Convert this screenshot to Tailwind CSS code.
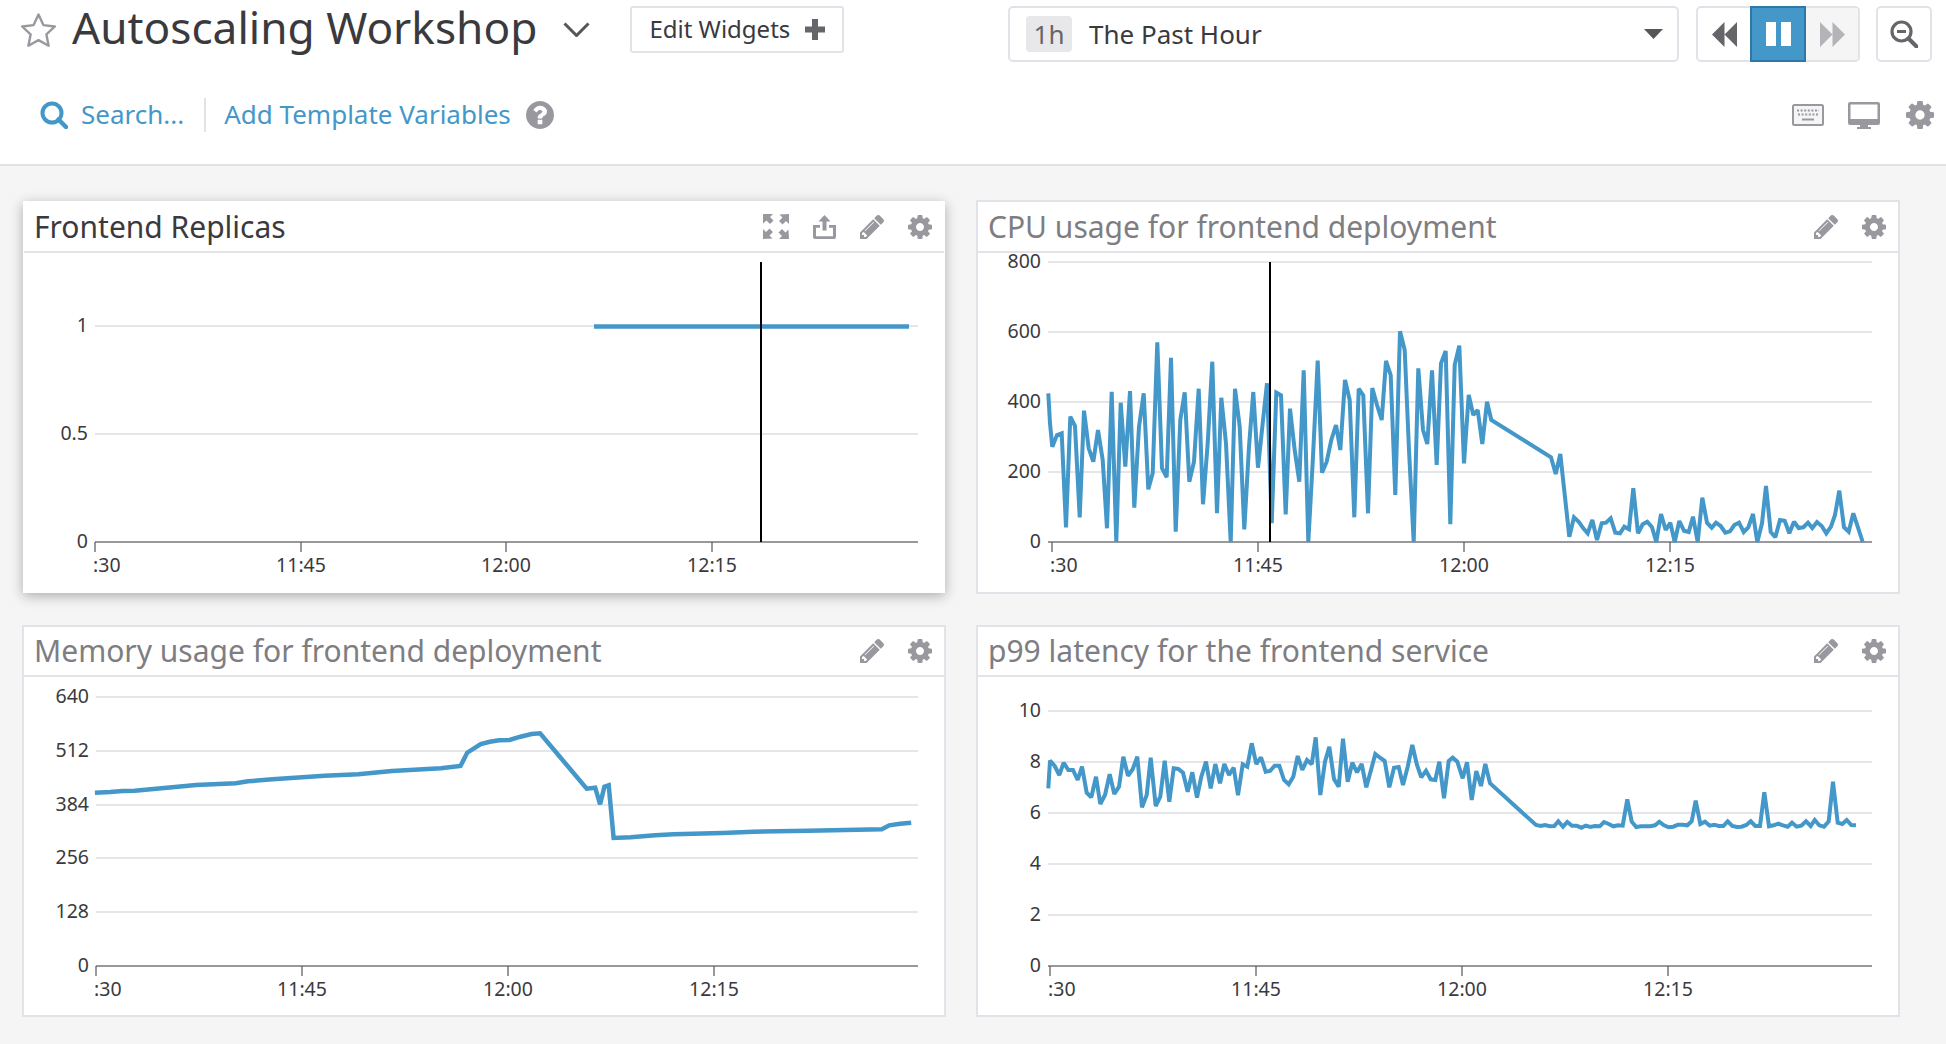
<!DOCTYPE html>
<html lang="en">
<head>
    <meta charset="UTF-8" />
    <title>Autoscaling Workshop</title>
    <script src="https://cdn.jsdelivr.net/npm/@tailwindcss/browser@4"></script>
</head>
<body class="bg-[#f5f5f6] font-['Noto_Sans',sans-serif] text-[#3a3a3e] overflow-hidden">
    <svg class="hidden">
        <symbol id="gear" viewBox="128 128 1536 1536"><path fill="currentColor" d="M1152 896q0-106-75-181t-181-75-181 75-75 181 75 181 181 75 181-75 75-181zm512-109v222q0 12-8 23t-20 13l-185 28q-19 54-39 91 35 50 107 138 10 12 10 25t-9 23q-27 37-99 108t-94 71q-12 0-26-9l-138-108q-44 23-91 38-16 136-29 186-7 28-36 28h-222q-14 0-24.5-8.5t-11.5-21.5l-28-184q-49-16-90-37l-141 107q-10 9-25 9-14 0-25-11-126-114-165-168-7-10-7-23 0-12 8-23 15-21 51-66.5t54-70.5q-27-50-41-99l-183-27q-13-2-21-12.5t-8-23.5v-222q0-12 8-23t19-13l186-28q14-46 39-92-40-57-107-138-10-12-10-24 0-10 9-23 26-36 98.5-107.5t94.5-71.5q13 0 26 10l138 107q44-23 91-38 16-136 29-186 7-28 36-28h222q14 0 24.5 8.5t11.5 21.5l28 184q49 16 90 37l142-107q9-9 24-9 13 0 25 10 129 119 165 170 7 8 7 22 0 12-8 23-15 21-51 66.5t-54 70.5q26 50 41 98l183 28q13 2 21 12.5t8 23.5z"/></symbol>
        <symbol id="pencil" viewBox="128 150 1516 1516"><path fill="currentColor" d="M491 1536l91-91-235-235-91 91v107h128v128h107zm523-928q0-22-22-22-10 0-17 7l-542 542q-7 7-7 17 0 22 22 22 10 0 17-7l542-542q7-7 7-17zm-54-192l416 416-832 832h-416v-416zm683 96q0 53-37 90l-166 166-416-416 166-165q36-38 90-38 53 0 91 38l235 234q37 39 37 91z"/></symbol>
    </svg>

    <!-- Top bar -->
    <header class="h-[166px] bg-white border-b-2 border-[#e2e2e8]">
        <div class="flex justify-between items-start pt-[6px] pr-[14px] pl-[20px]">
            <div class="flex items-center h-[47px]">
                <svg class="w-[37px] h-[35px] text-[#98989e]" viewBox="0 0 37 35"><path d="M18.5 2.5l4.9 10.6 11.4 1.4-8.4 7.9 2.2 11.3-10.1-5.6-10.1 5.6 2.2-11.3-8.4-7.9 11.4-1.4z" fill="none" stroke="currentColor" stroke-width="2.4" stroke-linejoin="round"/></svg>
                <h1 class="ml-[15px] text-[44.2px] leading-[44px] -mt-[6px] whitespace-nowrap">Autoscaling Workshop</h1>
                <svg class="ml-[26px] w-[27px] h-[15px] text-[#55555a]" viewBox="0 0 27 15"><path d="M1.5 1.5l12 12 12-12" fill="none" stroke="currentColor" stroke-width="3"/></svg>
                <button class="ml-[40px] w-[214px] h-[47px] flex items-center justify-center gap-[15px] border-2 border-[#e2e2e8] rounded-[3px] text-[24px] whitespace-nowrap">
                    <span class="-mt-[2px]">Edit Widgets</span>
                    <svg class="w-[20px] h-[21px] text-[#66666a]" viewBox="0 0 20 21"><path d="M7 0h6v7.500h7v6h-7v7.500h-6v-7.500h-7v-6h7z" fill="currentColor"/></svg>
                </button>
            </div>
            <div class="flex items-start">
                <div class="w-[671px] h-[56px] flex items-center border-2 border-[#e2e2e8] rounded-[5px] pl-[16px] pr-[14px]">
                    <span class="w-[46px] h-[36px] flex items-center justify-center bg-[#e8e8ea] rounded-[4px] text-[#66666a] text-[26px]">1h</span>
                    <span class="ml-[17px] text-[26px]">The Past Hour</span>
                    <svg class="ml-auto w-[19px] h-[10px] text-[#55555a]" viewBox="0 0 19 10"><path d="M0 0h19l-9.500 10z" fill="currentColor"/></svg>
                </div>
                <div class="ml-[17px] w-[164px] h-[56px] flex border-2 border-[#e2e2e8] rounded-[5px]">
                    <span class="w-[52px] flex items-center justify-center">
                        <svg class="w-[25px] h-[25px] text-[#66666a]" viewBox="0 0 25 25"><path d="M12.500 0v25l-12.500-12.500zM25 0v25l-12.500-12.500z" fill="currentColor"/></svg>
                    </span>
                    <span class="w-[56px] -my-[2px] flex items-center justify-center gap-[5px] bg-[#4497c9] border-2 border-[#2f77a6]">
                        <i class="block w-[10px] h-[24px] bg-white"></i>
                        <i class="block w-[10px] h-[24px] bg-white"></i>
                    </span>
                    <span class="flex-1 flex items-center justify-center bg-[#f5f5f6] rounded-r-[3px]">
                        <svg class="w-[25px] h-[25px] text-[#b4b4b8]" viewBox="0 0 25 25"><path d="M0 0v25l12.500-12.500zM12.500 0v25l12.500-12.500z" fill="currentColor"/></svg>
                    </span>
                </div>
                <div class="ml-[16px] w-[56px] h-[56px] flex items-center justify-center border-2 border-[#e2e2e8] rounded-[5px]">
                    <svg class="w-[28px] h-[28px] text-[#66666a]" viewBox="0 0 28 28"><circle cx="11.500" cy="11.500" r="9.500" fill="none" stroke="currentColor" stroke-width="3.200"/><path d="M18.500 18.500l8 8" stroke="currentColor" stroke-width="4" stroke-linecap="round"/><path d="M7 11.500h9" stroke="currentColor" stroke-width="3"/></svg>
                </div>
            </div>
        </div>
        <div class="flex justify-between items-center h-[34px] mt-[36px] pl-[40px] pr-[12px]">
            <div class="flex items-center text-[#4497c9] text-[26px]">
                <svg class="w-[28px] h-[28px]" viewBox="0 0 28 28"><circle cx="12" cy="12" r="9.500" fill="none" stroke="currentColor" stroke-width="4"/><path d="M18.500 18.500l7.500 7.500" stroke="currentColor" stroke-width="4.500" stroke-linecap="round"/></svg>
                <span class="ml-[13px] -mt-[2px]">Search...</span>
                <i class="block ml-[20px] w-[2px] h-[34px] bg-[#e2e2e8]"></i>
                <span class="ml-[18px] -mt-[2px]">Add Template Variables</span>
                <svg class="ml-[15px] w-[28px] h-[28px] text-[#98989e]" viewBox="0 128 1536 1536"><path fill="currentColor" d="M896 1376v-192q0-14-9-23t-23-9h-192q-14 0-23 9t-9 23v192q0 14 9 23t23 9h192q14 0 23-9t9-23zm256-672q0-88-55.500-163t-138.500-116-170-41q-243 0-371 213-15 24 8 42l132 100q7 6 19 6 16 0 25-12 53-68 86-92 34-24 86-24 48 0 85.500 26t37.500 59q0 38-20 61t-68 45q-63 28-115.500 86.500t-52.500 125.500v36q0 14 9 23t23 9h192q14 0 23-9t9-23q0-19 21.500-49.500t54.500-49.500q32-18 49-28.500t46-35 44.500-48 28-60.500 12.500-81zm384 192q0 209-103 385.500t-279.500 279.500-385.500 103-385.500-103-279.500-279.500-103-385.500 103-385.500 279.500-279.500 385.500-103 385.500 103 279.500 279.500 103 385.500z"/></svg>
            </div>
            <div class="flex items-center text-[#98989e]">
                <svg class="w-[32px] h-[22px]" viewBox="0 0 32 22"><rect x="1" y="1" width="30" height="20" rx="1.500" fill="#f5f5f6" stroke="currentColor" stroke-width="2"/><path d="M5 6.500h22M6 10.500h20" stroke="currentColor" stroke-width="2" stroke-dasharray="2 1.600"/><path d="M10 15.500h12" stroke="currentColor" stroke-width="2"/></svg>
                <svg class="ml-[24px] w-[32px] h-[27px]" viewBox="0 0 32 27"><path d="M2 0h28a2 2 0 0 1 2 2v19a2 2 0 0 1-2 2h-10v2h3v2h-14v-2h3v-2h-10a2 2 0 0 1-2-2v-19a2 2 0 0 1 2-2zM2.500 2.500v14.500h27v-14.500z" fill="currentColor" fill-rule="evenodd"/></svg>
                <svg class="ml-[26px] w-[28px] h-[28px]"><use href="#gear"/></svg>
            </div>
        </div>
    </header>

    <!-- Widgets -->
    <main class="grid grid-cols-[924px_924px] grid-rows-[394px_392px] gap-x-[30px] gap-y-[31px] pt-[34px] pl-[22px]">
        <section class="flex flex-col m-[1px] bg-white border border-white shadow-[0_3px_12px_rgba(0,0,0,0.3)]">
            <div class="flex items-center h-[51px] pl-[10px] pr-[12px] border-b-2 border-[#e2e2e8]">
                <h2 class="text-[30px] leading-[40px] whitespace-nowrap">Frontend Replicas</h2>
                <div class="ml-auto flex items-center gap-[24px] text-[#98989e]">
                    <svg class="w-[26px] h-[25px]" viewBox="0 0 26 25"><path d="M0 0h10l-3 3 3.500 3.500-3.500 3.500-3.500-3.500-3.500 3zM26 0v10l-3-3-3.500 3.500-3.500-3.500 3.500-3.500-3-3zM0 25v-10l3 3 3.500-3.500 3.500 3.500-3.500 3.500 3 3zM26 25h-10l3-3-3.500-3.500 3.500-3.500 3.500 3.500 3-3z" fill="currentColor"/></svg>
                    <svg class="w-[23px] h-[24px]" viewBox="0 0 23 24"><path d="M11.500 0l6 6.500h-4v9h-4v-9h-4zM0 10h7v2.800h-4v8.400h17v-8.400h-4v-2.800h7v12a2 2 0 0 1-2 2h-19a2 2 0 0 1-2-2z" fill="currentColor"/></svg>
                    <svg class="w-[24px] h-[24px]"><use href="#pencil"/></svg>
                    <svg class="w-[24px] h-[24px]"><use href="#gear"/></svg>
                </div>
            </div>
            <svg id="chartReplicas" class="flex-1 w-full min-h-0 overflow-visible"></svg>
        </section>

        <section class="flex flex-col bg-white border-2 border-[#e2e2e8]">
            <div class="flex items-center h-[51px] pl-[10px] pr-[12px] border-b-2 border-[#e2e2e8]">
                <h2 class="text-[30px] leading-[40px] text-[#7e7e82] whitespace-nowrap">CPU usage for frontend deployment</h2>
                <div class="ml-auto flex items-center gap-[24px] text-[#98989e]">
                    <svg class="w-[24px] h-[24px]"><use href="#pencil"/></svg>
                    <svg class="w-[24px] h-[24px]"><use href="#gear"/></svg>
                </div>
            </div>
            <svg id="chartCpu" class="flex-1 w-full min-h-0 overflow-visible"></svg>
        </section>

        <section class="flex flex-col bg-white border-2 border-[#e2e2e8]">
            <div class="flex items-center h-[50px] pl-[10px] pr-[12px] border-b-2 border-[#e2e2e8]">
                <h2 class="text-[30px] leading-[40px] text-[#7e7e82] whitespace-nowrap">Memory usage for frontend deployment</h2>
                <div class="ml-auto flex items-center gap-[24px] text-[#98989e]">
                    <svg class="w-[24px] h-[24px]"><use href="#pencil"/></svg>
                    <svg class="w-[24px] h-[24px]"><use href="#gear"/></svg>
                </div>
            </div>
            <svg id="chartMemory" class="flex-1 w-full min-h-0 overflow-visible"></svg>
        </section>

        <section class="flex flex-col bg-white border-2 border-[#e2e2e8]">
            <div class="flex items-center h-[50px] pl-[10px] pr-[12px] border-b-2 border-[#e2e2e8]">
                <h2 class="text-[30px] leading-[40px] text-[#7e7e82] whitespace-nowrap">p99 latency for the frontend service</h2>
                <div class="ml-auto flex items-center gap-[24px] text-[#98989e]">
                    <svg class="w-[24px] h-[24px]"><use href="#pencil"/></svg>
                    <svg class="w-[24px] h-[24px]"><use href="#gear"/></svg>
                </div>
            </div>
            <svg id="chartLatency" class="flex-1 w-full min-h-0 overflow-visible"></svg>
        </section>
    </main>

    <script>
        // all series were read off the picture at 3x, so they get scaled down to page coords
        const cpuRaw = [235,610,240,700,247,770,261,735,275,730,288,1012,301,680,315,708,329,982,342,662,356,775,370,815,384,720,398,810,411,1015,425,605,439,1056,452,638,466,830,480,603,493,953,507,710,521,610,535,898,548,850,562,457,576,835,590,862,603,503,617,1025,631,690,644,607,658,875,672,815,686,596,699,943,713,760,727,515,741,970,754,623,768,760,782,1056,795,596,809,710,823,1018,837,770,850,606,864,833,878,700,891,580,905,1000,919,608,933,616,947,973,960,656,974,780,988,875,1001,541,1015,1056,1029,800,1043,512,1056,848,1070,815,1084,750,1098,705,1111,780,1125,570,1139,630,1153,982,1166,596,1180,616,1194,970,1207,594,1221,645,1235,690,1248,513,1262,555,1276,915,1290,424,1304,480,1317,780,1331,1056,1345,535,1359,720,1372,762,1386,541,1400,825,1413,520,1427,483,1441,1003,1454,525,1468,467,1482,820,1496,615,1510,675,1523,660,1537,762,1551,635,1564,690,1743,802,1757,852,1771,792,1798,1040,1812,982,1826,995,1840,1015,1853,1030,1867,990,1881,1050,1895,1000,1908,998,1922,985,1936,1028,1950,1030,1963,1010,1977,1018,1990,895,2004,1030,2018,1003,2032,995,2046,1012,2059,1056,2073,972,2087,1020,2101,998,2114,1056,2128,993,2142,1022,2156,1026,2169,980,2183,1056,2197,923,2211,998,2225,1013,2238,998,2252,1008,2266,1028,2280,1024,2293,1005,2307,998,2321,1026,2335,1012,2349,972,2362,1056,2376,1000,2388,888,2402,1026,2416,1042,2430,990,2444,992,2458,1030,2472,995,2486,1014,2500,1012,2514,998,2527,1014,2541,996,2555,1008,2569,1030,2583,1010,2595,975,2608,902,2622,1012,2636,1025,2650,970,2663,1010,2678,1056];
        const latencyRaw = [235,535,240,452,254,468,268,495,281,458,295,480,309,480,323,510,336,470,350,548,364,562,378,500,391,582,405,555,419,493,433,552,447,530,460,440,474,497,488,478,502,440,516,592,530,555,542,443,557,588,571,560,584,452,598,575,611,475,625,477,639,488,653,545,667,487,681,563,694,500,708,455,722,535,736,462,750,520,763,462,777,495,791,473,804,556,818,463,832,470,845,400,859,462,873,442,887,485,900,483,914,467,928,467,942,510,956,523,970,500,983,438,997,480,1011,450,1025,463,1037,382,1051,555,1065,455,1078,410,1092,507,1106,530,1119,386,1133,515,1147,458,1161,487,1175,462,1189,532,1203,480,1216,432,1230,443,1244,453,1258,532,1272,473,1286,471,1299,525,1313,470,1327,405,1341,465,1354,502,1368,482,1382,508,1396,510,1408,455,1422,565,1436,453,1448,443,1462,455,1478,505,1491,457,1505,570,1519,483,1533,528,1546,462,1560,520,1698,645,1712,648,1725,645,1739,649,1753,648,1765,634,1779,650,1792,636,1806,647,1820,647,1834,653,1847,647,1861,651,1875,648,1889,649,1902,636,1916,642,1930,649,1944,646,1958,647,1972,568,1985,635,1999,651,2013,649,2027,649,2041,649,2055,646,2068,635,2082,646,2096,652,2110,650,2124,644,2138,644,2152,646,2165,634,2177,572,2191,642,2205,635,2219,647,2233,644,2246,648,2260,648,2273,634,2287,648,2301,651,2315,650,2329,645,2342,634,2356,648,2370,648,2383,547,2397,649,2411,646,2425,641,2439,646,2453,650,2466,638,2480,650,2494,647,2508,634,2522,648,2534,630,2548,646,2562,650,2576,634,2589,515,2603,638,2617,642,2630,630,2644,645,2658,646];
        const memoryRaw = [155,548,180,546,200,543,220,542,290,530,320,525,385,520,405,514,445,508,530,497,585,493,640,483,720,475,752,468,763,428,785,402,800,395,815,391,832,390,850,380,868,372,882,370,958,536,972,533,980,583,987,530,994,526,1002,684,1030,682,1070,676,1100,673,1180,669,1230,665,1320,662,1440,658,1452,646,1470,641,1488,638];

        function toPoints(raw, scaleX, offsetX, offsetY) {
            const points = [];
            for (let i = 0; i < raw.length; i += 2) {
                points.push((offsetX + raw[i] / scaleX).toFixed(1) + "," + (offsetY + raw[i + 1] / 3).toFixed(1));
            }
            return points.join(" ");
        }

        function drawChart(id, opts) {
            const svg = document.getElementById(id);
            svg.setAttribute("viewBox", opts.box);
            const font = 'font-family="Noto Sans" font-size="19.500" fill="#3a3a3e"';
            let html = "";
            opts.grid.forEach(([label, y]) => {
                if (y !== opts.axisY) {
                    html += `<line x1="${opts.x0}" x2="${opts.x1}" y1="${y}" y2="${y}" stroke="#e6e6ea" stroke-width="1.800"/>`;
                }
                html += `<text x="${opts.x0 - 7}" y="${y + 5.500}" text-anchor="end" ${font}>${label}</text>`;
            });
            html += `<line x1="${opts.x0}" x2="${opts.x1}" y1="${opts.axisY}" y2="${opts.axisY}" stroke="#77777c" stroke-width="1.500"/>`;
            ["", "11:45", "12:00", "12:15"].forEach((label, i) => {
                const x = opts.ticks[i];
                html += `<line x1="${x}" x2="${x}" y1="${opts.axisY}" y2="${opts.axisY + 10}" stroke="#55555a" stroke-width="1.200"/>`;
                if (label) {
                    html += `<text x="${x}" y="${opts.axisY + 30}" text-anchor="middle" ${font}>${label}</text>`;
                } else {
                    html += `<text x="${x - 2}" y="${opts.axisY + 30}" ${font}>:30</text>`;
                }
            });
            html += `<polyline points="${opts.points}" fill="none" stroke="#4497c9" stroke-width="${opts.stroke || 4}" stroke-linejoin="miter" stroke-miterlimit="2"/>`;
            if (opts.cursor) {
                html += `<line x1="${opts.cursor}" x2="${opts.cursor}" y1="262" y2="${opts.axisY}" stroke="#000" stroke-width="2"/>`;
            }
            svg.innerHTML = html;
        }

        drawChart("chartReplicas", {
            box: "24 253 920 339", x0: 95, x1: 918, axisY: 542,
            grid: [["1", 326], ["0.5", 434], ["0", 542]],
            ticks: [95, 301, 506, 712], cursor: 761,
            points: "594,326.500 909,326.500", stroke: 4.500,
        });
        drawChart("chartCpu", {
            box: "978 253 920 339", x0: 1048, x1: 1872, axisY: 542,
            grid: [["800", 262], ["600", 332], ["400", 402], ["200", 472], ["0", 542]],
            ticks: [1052, 1258, 1464, 1670], cursor: 1270,
            points: toPoints(cpuRaw, 3, 970, 190),
        });
        drawChart("chartMemory", {
            box: "24 677 920 338", x0: 96, x1: 918, axisY: 966,
            grid: [["640", 697], ["512", 751], ["384", 805], ["256", 858], ["128", 912], ["0", 966]],
            ticks: [96, 302, 508, 714],
            points: toPoints(memoryRaw, 1.633, 0, 610), stroke: 4.500,
        });
        drawChart("chartLatency", {
            box: "978 677 920 338", x0: 1048, x1: 1872, axisY: 966,
            grid: [["10", 711], ["8", 762], ["6", 813], ["4", 864], ["2", 915], ["0", 966]],
            ticks: [1050, 1256, 1462, 1668],
            points: toPoints(latencyRaw, 3, 970, 610),
        });
    </script>
</body>
</html>
